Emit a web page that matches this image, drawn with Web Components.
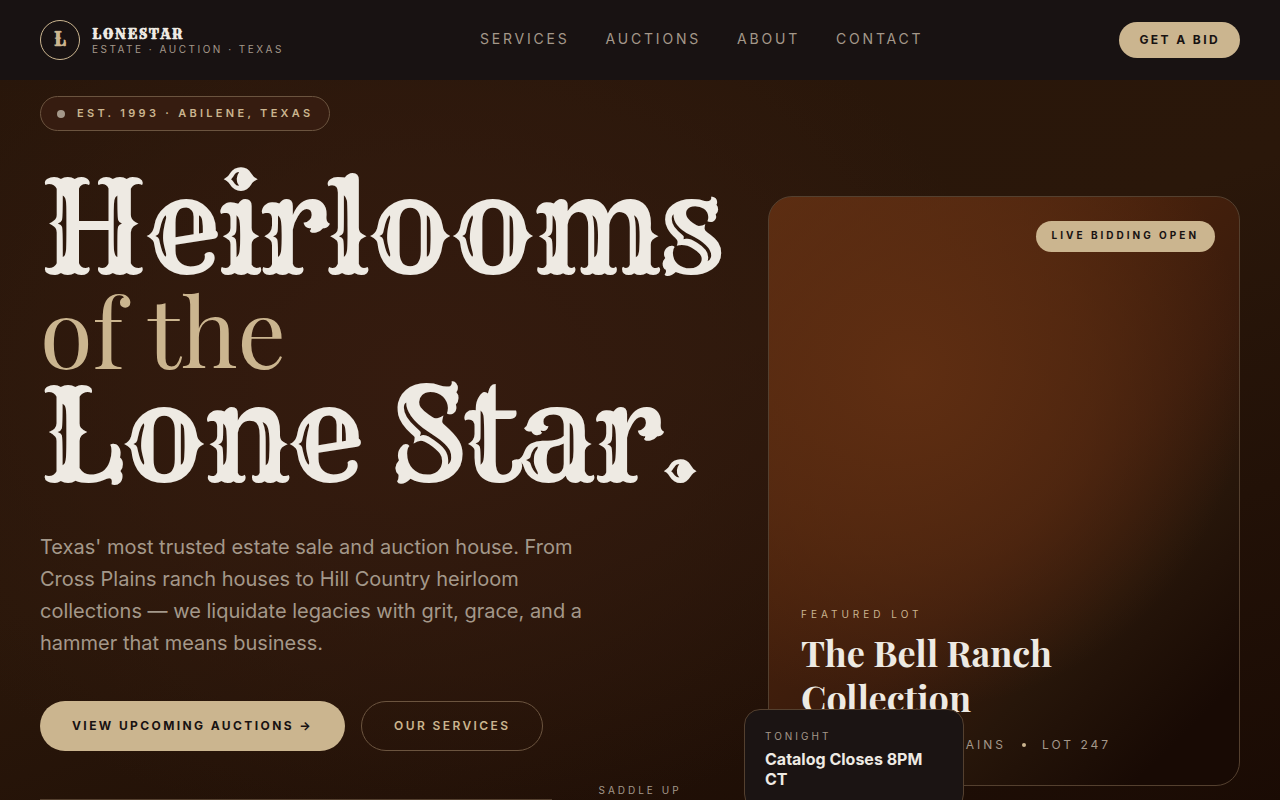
<!DOCTYPE html>
<html lang="en">
<head>
<meta charset="utf-8">
<meta name="viewport" content="width=device-width, initial-scale=1">
<title>Lonestar Estate Auction</title>
<style>
  :root {
    --sand: #cbb58f;
    --cream: #eeeae3;
    --muted: #a4988a;
    --ink: #181212;
    --line: #54402f;
    --western: Rye, "DejaVu Serif Condensed", "DejaVu Serif", serif;
    --display: "Playfair Display", "Liberation Serif", serif;
  }
  body {
    margin: 0;
    background: #1c0e06;
    color: var(--cream);
    font-family: Inter, "Liberation Sans", sans-serif;
  }
</style>
</head>
<body>

<site-header>
  <brand-mark slot="brand" initial="L" name="LONESTAR">ESTATE · AUCTION · TEXAS</brand-mark>
  <nav-link href="#services">SERVICES</nav-link>
  <nav-link href="#auctions">AUCTIONS</nav-link>
  <nav-link href="#about">ABOUT</nav-link>
  <nav-link href="#contact">CONTACT</nav-link>
  <pill-button slot="action" size="small">GET A BID</pill-button>
</site-header>

<hero-section>
  <hero-intro>
    <span slot="badge">EST. 1993 · ABILENE, TEXAS</span>
    <span slot="first">Heirlooms</span>
    <span slot="second">of the</span>
    <span slot="third">Lone Star.</span>
    <span slot="lead">Texas' most trusted estate sale and auction house. From Cross Plains ranch houses to Hill Country heirloom collections — we liquidate legacies with grit, grace, and a hammer that means business.</span>
    <pill-button slot="actions">VIEW UPCOMING AUCTIONS →</pill-button>
    <pill-button slot="actions" variant="outline">OUR SERVICES</pill-button>
  </hero-intro>
  <lot-card slot="feature">
    <span slot="status">LIVE BIDDING OPEN</span>
    <span slot="label">FEATURED LOT</span>
    <span slot="title">The Bell Ranch Collection</span>
    <span slot="meta">CROSS PLAINS</span>
    <span slot="lot">LOT 247</span>
    <notice-card slot="notice" label="TONIGHT">Catalog Closes 8PM CT</notice-card>
  </lot-card>
  <span slot="scroll">SADDLE UP</span>
</hero-section>

<template id="site-header">
  <style>
    :host { display: block; }
    header {
      display: flex;
      justify-content: space-between;
      align-items: center;
      height: 80px;
      padding: 0 40px;
      background: var(--ink);
    }
    nav { display: flex; gap: 36px; padding-bottom: 4px; }
  </style>
  <header>
    <slot name="brand"></slot>
    <nav><slot></slot></nav>
    <slot name="action"></slot>
  </header>
</template>

<template id="brand-mark">
  <style>
    :host { display: block; }
    a { display: flex; align-items: center; gap: 12px; color: inherit; text-decoration: none; }
    .seal {
      box-sizing: border-box;
      width: 40px;
      height: 40px;
      border: 1px solid var(--sand);
      border-radius: 50%;
      color: var(--sand);
      font: bold 18px/38px var(--western);
      text-align: center;
    }
    .words { padding-top: 2px; }
    .name { display: block; font: bold 14px/16px var(--western); letter-spacing: 0.1em; }
    .tag { display: block; font-size: 10px; line-height: 15px; letter-spacing: 0.25em; color: var(--muted); }
  </style>
  <a href="#top">
    <span class="seal"></span>
    <span class="words">
      <span class="name"></span>
      <span class="tag"><slot></slot></span>
    </span>
  </a>
</template>

<template id="nav-link">
  <style>
    :host { display: block; }
    a {
      color: var(--muted);
      font-size: 14px;
      line-height: 20px;
      letter-spacing: 0.2em;
      text-decoration: none;
    }
    a:hover { color: var(--sand); }
  </style>
  <a><slot></slot></a>
</template>

<template id="pill-button">
  <style>
    :host { display: block; }
    button {
      display: block;
      padding: 17px 32px;
      border: 0;
      border-radius: 32px;
      background: var(--sand);
      color: var(--ink);
      font: bold 12px/16px Inter, sans-serif;
      letter-spacing: 0.2em;
      white-space: nowrap;
      cursor: pointer;
    }
    :host([size="small"]) button { padding: 10px 20px; }
    :host([variant="outline"]) button {
      padding: 16px 32px;
      border: 1px solid #6b543f;
      background: transparent;
      color: var(--sand);
      font-weight: 600;
    }
  </style>
  <button type="button"><slot></slot></button>
</template>

<template id="hero-section">
  <style>
    :host {
      display: block;
      position: relative;
      overflow: hidden;
      background:
        radial-gradient(ellipse 46% 62% at 33% 42%, #351b0f, #341b0f99 50%, transparent),
        linear-gradient(160deg, #28160a 0%, #2a170a 45%, #1a0b04 100%);
    }
    .grid {
      display: grid;
      grid-template-columns: repeat(12, 1fr);
      gap: 48px;
      padding: 16px 40px 10px;
    }
    .intro { grid-column: span 7; }
    .feature { grid-column: span 5; padding-top: 100px; }
    .scroll {
      position: absolute;
      left: 0;
      right: 0;
      bottom: 12px;
      color: var(--muted);
      font-size: 10px;
      line-height: 16px;
      letter-spacing: 0.3em;
      text-align: center;
      pointer-events: none;
    }
  </style>
  <div class="grid">
    <div class="intro"><slot></slot></div>
    <div class="feature"><slot name="feature"></slot></div>
  </div>
  <div class="scroll"><slot name="scroll"></slot></div>
</template>

<template id="hero-intro">
  <style>
    :host { display: block; }
    .badge {
      display: inline-flex;
      align-items: center;
      gap: 12px;
      padding: 8px 16px;
      border: 1px solid #6b543f;
      border-radius: 20px;
      background: #361c10;
      color: var(--sand);
      font-size: 11px;
      font-weight: 600;
      line-height: 17px;
      letter-spacing: 0.3em;
    }
    .dot { width: 8px; height: 8px; border-radius: 50%; background: var(--muted); }
    h1 {
      margin: 44px 0;
      font: normal 128px/104px var(--western);
      letter-spacing: -0.025em;
      white-space: nowrap;
    }
    h1 span { display: block; }
    .second {
      margin: 8px 0 12px;
      color: var(--sand);
      font: normal 96px/84px var(--display);
      letter-spacing: normal;
    }
    p {
      max-width: 560px;
      margin: 0;
      color: var(--muted);
      font-size: 20px;
      line-height: 32px;
    }
    .actions { display: flex; gap: 16px; margin-top: 42px; }
    hr { width: 512px; max-width: 100%; height: 1px; margin: 48px 0 0; border: 0; background: var(--line); }
  </style>
  <div class="badge"><span class="dot"></span><slot name="badge"></slot></div>
  <h1>
    <span><slot name="first"></slot></span>
    <span class="second"><slot name="second"></slot></span>
    <span><slot name="third"></slot></span>
  </h1>
  <p><slot name="lead"></slot></p>
  <div class="actions"><slot name="actions"></slot></div>
  <hr>
</template>

<template id="lot-card">
  <style>
    :host { display: block; position: relative; }
    article {
      box-sizing: border-box;
      display: flex;
      flex-direction: column;
      justify-content: space-between;
      aspect-ratio: 4 / 5;
      padding: 24px 24px 31px 32px;
      border: 1px solid var(--line);
      border-radius: 24px;
      background:
        radial-gradient(circle at 30% 30%, #5f2e12 0%, #5c2d1299 35%, transparent 64%),
        linear-gradient(135deg, #5c2d12 0%, #45200c 38%, #391b0c 56%, #27160a 71%, #180a04 90%);
    }
    .status {
      align-self: flex-end;
      padding: 7px 16px 9px;
      border-radius: 16px;
      background: var(--sand);
      color: var(--ink);
      font-size: 10px;
      font-weight: 700;
      line-height: 15px;
      letter-spacing: 0.3em;
    }
    .label { color: var(--sand); font-size: 10px; line-height: 15px; letter-spacing: 0.4em; }
    h2 {
      margin: 8px 0 16px;
      max-width: 320px;
      font: bold 36px/45px var(--display);
    }
    .meta {
      display: flex;
      align-items: center;
      gap: 16px;
      color: var(--muted);
      font-size: 12px;
      line-height: 18px;
      letter-spacing: 0.25em;
    }
    .place { width: 205px; text-align: right; }
    .meta i { width: 4px; height: 4px; border-radius: 50%; background: var(--sand); }
    .notice { position: absolute; left: -24px; bottom: -24px; width: 220px; }
  </style>
  <article>
    <div class="status"><slot name="status"></slot></div>
    <div>
      <div class="label"><slot name="label"></slot></div>
      <h2><slot name="title"></slot></h2>
      <div class="meta"><span class="place"><slot name="meta"></slot></span><i></i><slot name="lot"></slot></div>
    </div>
  </article>
  <div class="notice"><slot name="notice"></slot></div>
</template>

<template id="notice-card">
  <style>
    :host {
      box-sizing: border-box;
      display: block;
      padding: 20px;
      border: 1px solid var(--line);
      border-radius: 16px;
      background: #1b1413;
    }
    .label { color: var(--muted); font-size: 10px; line-height: 12px; letter-spacing: 0.3em; }
    .text { margin-top: 7px; font-size: 16px; font-weight: 700; line-height: 20px; }
  </style>
  <div class="label"></div>
  <div class="text"><slot></slot></div>
</template>

<script>
  class BaseElement extends HTMLElement {
    constructor() {
      super();
      this.attachShadow({mode: 'open'});
      const template = document.getElementById(this.localName);
      this.shadowRoot.appendChild(template.content.cloneNode(true));
    }

    find(selector) {
      return this.shadowRoot.querySelector(selector);
    }
  }

  class SiteHeader extends BaseElement {}
  class HeroSection extends BaseElement {}
  class HeroIntro extends BaseElement {}
  class LotCard extends BaseElement {}
  class PillButton extends BaseElement {}

  class BrandMark extends BaseElement {
    connectedCallback() {
      this.find('.seal').textContent = this.getAttribute('initial');
      this.find('.name').textContent = this.getAttribute('name');
    }
  }

  class NavLink extends BaseElement {
    connectedCallback() {
      this.find('a').href = this.getAttribute('href');
    }
  }

  class NoticeCard extends BaseElement {
    connectedCallback() {
      this.find('.label').textContent = this.getAttribute('label');
    }
  }

  customElements.define('site-header', SiteHeader);
  customElements.define('brand-mark', BrandMark);
  customElements.define('nav-link', NavLink);
  customElements.define('pill-button', PillButton);
  customElements.define('hero-section', HeroSection);
  customElements.define('hero-intro', HeroIntro);
  customElements.define('lot-card', LotCard);
  customElements.define('notice-card', NoticeCard);
</script>
</body>
</html>
